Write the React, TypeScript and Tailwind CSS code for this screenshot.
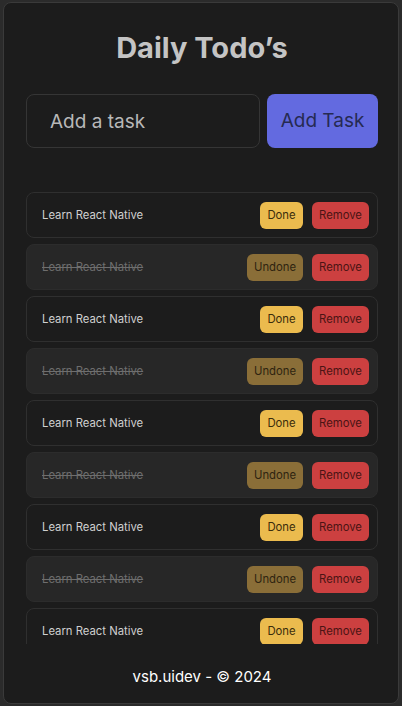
import { useState } from "react";

type Todo = { id: number; text: string; done: boolean };

const initialTodos: Todo[] = Array.from({ length: 9 }, (_, i) => ({
  id: i,
  text: "Learn React Native",
  done: i % 2 === 1,
}));

export default function App() {
  const [todos, setTodos] = useState<Todo[]>(initialTodos);
  const [task, setTask] = useState("");

  const addTask = () => {
    if (!task.trim()) return;
    setTodos([...todos, { id: Date.now(), text: task.trim(), done: false }]);
    setTask("");
  };

  const toggle = (id: number) =>
    setTodos(todos.map((t) => (t.id === id ? { ...t, done: !t.done } : t)));

  const remove = (id: number) => setTodos(todos.filter((t) => t.id !== id));

  return (
    <div
      className="w-[402px] h-[706px] bg-[#2b2b2b] pt-[2px] px-[3px] overflow-hidden"
      style={{ fontFamily: "Inter, 'Noto Sans', sans-serif" }}
    >
      <div className="h-[702px] bg-[#1c1c1c] border border-[#3a3a3a] rounded-[8px] flex flex-col pl-[22px] pr-[20px] pt-[28px]">
        {/* Header */}
        <h1 className="text-center text-[29px] leading-[34px] font-bold text-[#c4c4c4]">
          Daily Todo’s
        </h1>

        {/* New task form */}
        <div className="flex gap-[7px] mt-[29px]">
          <input
            value={task}
            onChange={(e) => setTask(e.target.value)}
            placeholder="Add a task"
            className="w-[234px] h-[54px] rounded-[8px] border border-[#353535] bg-[#1c1c1c] pl-[23px] text-[19px] text-[#d0d0d0] placeholder:text-[#b8b8b8] outline-none"
          />
          <button
            onClick={addTask}
            className="flex-1 h-[54px] rounded-[8px] bg-[#636ae0] text-[19px] text-[#262a52]"
          >
            Add Task
          </button>
        </div>

        {/* Task list */}
        <div className="mt-[44px] h-[452px] overflow-hidden flex flex-col gap-[6px]">
          {todos.map((todo) => (
            <div
              key={todo.id}
              className={`shrink-0 h-[46px] rounded-[8px] border flex items-center pl-[15px] pr-[8px] ${
                todo.done
                  ? "bg-[#272727] border-[#2c2c2c]"
                  : "bg-[#1c1c1c] border-[#2f2f2f]"
              }`}
            >
              <span
                className={`flex-1 text-[11.3px] ${
                  todo.done ? "line-through text-[#6e6e6e]" : "text-[#cfcfcf]"
                }`}
              >
                {todo.text}
              </span>
              <div className="flex gap-[9px]">
                <button
                  onClick={() => toggle(todo.id)}
                  className={`h-[27px] rounded-[6px] text-[11.3px] ${
                    todo.done
                      ? "w-[56px] bg-[#8a6e38] text-[#2e2410]"
                      : "w-[43px] bg-[#ebbb4e] text-[#3a2c0c]"
                  }`}
                >
                  {todo.done ? "Undone" : "Done"}
                </button>
                <button
                  onClick={() => remove(todo.id)}
                  className="w-[57px] h-[27px] rounded-[6px] bg-[#cc4040] text-[11.3px] text-[#4a1414]"
                >
                  Remove
                </button>
              </div>
            </div>
          ))}
        </div>

        {/* Footer */}
        <p className="text-center text-[15px] text-white mt-[22px]">
          vsb.uidev - © 2024
        </p>
      </div>
    </div>
  );
}
